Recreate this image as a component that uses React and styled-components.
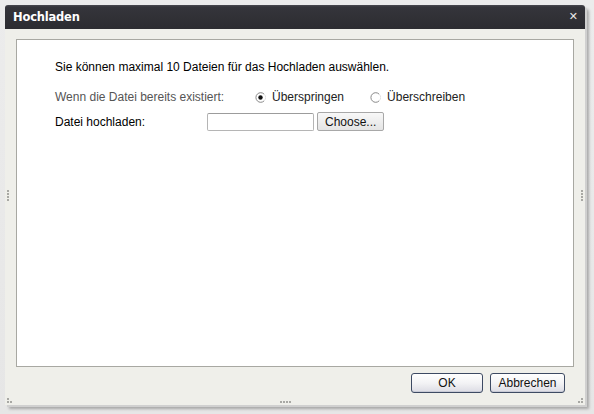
import React from "react";
import styled, { createGlobalStyle } from "styled-components";

const Global = createGlobalStyle`
  html, body { margin: 0; padding: 0; background: #e9e9e9; }
  body { font-family: "Liberation Sans", Arial, sans-serif; }
  #root { width: 594px; height: 414px; overflow: hidden; }
`;

const Page = styled.div`
  width: 594px;
  height: 414px;
  padding: 5px 0 0 5px;
  box-sizing: border-box;
  background: linear-gradient(#ececec, #e6e6e6);
`;

const Window = styled.div`
  position: relative;
  width: 580px;
  height: 400px;
  display: flex;
  flex-direction: column;
  background: #efefea;
  box-shadow: 2px 2px 0 #d0d0d0, 4px 4px 3px rgba(0, 0, 0, 0.28);
  border-radius: 3px 3px 0 0;
`;

const TitleBar = styled.div`
  height: 24px;
  flex: none;
  display: flex;
  align-items: center;
  justify-content: space-between;
  padding: 0 7px 0 8px;
  background: linear-gradient(#4a4a52 0, #35353b 2px, #2c2c31 100%);
  border-radius: 3px 3px 0 0;
  color: #fff;
`;

const Title = styled.span`
  font-family: "DejaVu Sans", Verdana, sans-serif;
  font-weight: bold;
  font-size: 11.5px;
  letter-spacing: -0.2px;
`;

const Close = styled.span`
  font-family: "DejaVu Sans", sans-serif;
  font-size: 11px;
  color: #e8e8e8;
  line-height: 1;
  margin-top: -1px;
`;

const Body = styled.div`
  flex: none;
  display: flex;
  flex-direction: column;
  padding: 10px 11px 0 11px;
`;

const Panel = styled.div`
  height: 328px;
  box-sizing: border-box;
  background: #fff;
  border: 1px solid #a8a8a2;
  padding: 20px 0 0 38px;
  font-size: 12px;
  color: #000;
`;

const Intro = styled.div`
  line-height: 14px;
  margin-bottom: 14px;
`;

const Row = styled.div`
  display: flex;
  align-items: center;
  height: ${(p) => p.$h || 18}px;
  margin-bottom: ${(p) => p.$mb || 0}px;
`;

const Label = styled.span`
  width: ${(p) => p.$w}px;
  flex: none;
  color: ${(p) => p.$color || "#000"};
`;

const RadioOpt = styled.label`
  display: flex;
  align-items: center;
  gap: 6px;
  margin-right: ${(p) => p.$mr || 0}px;
  color: #222;
`;

const Input = styled.div`
  width: 105px;
  height: 16px;
  border: 1px solid #b5b5b5;
  border-top-color: #9c9c9c;
  border-radius: 2px;
  background: #fff;
  margin-right: 3px;
`;

const SmallButton = styled.div`
  height: 17px;
  padding: 0 7px;
  display: flex;
  align-items: center;
  border: 1px solid #a8a8a8;
  border-radius: 2px;
  background: linear-gradient(#f8f8f8, #e4e4e4);
  font-size: 12px;
  color: #111;
`;

const Footer = styled.div`
  flex: 1;
  display: flex;
  justify-content: flex-end;
  align-items: flex-start;
  gap: 7px;
  padding: 6px 20px 0 0;
`;

const Button = styled.div`
  width: ${(p) => p.$w}px;
  height: 18px;
  border: 1px solid #3d4a63;
  border-radius: 3px;
  background: linear-gradient(#ffffff 0%, #f3f3f5 50%, #dcdce4 100%);
  box-shadow: inset 0 -1px 0 #c8cad6;
  display: flex;
  align-items: center;
  justify-content: center;
  font-size: 12px;
  color: #111;
`;

const Grip = styled.div`
  position: absolute;
  display: grid;
  gap: 1px;
  grid-template-columns: repeat(${(p) => p.$cols}, 2px);
  grid-auto-rows: 2px;
  ${(p) => p.$pos}
  & > i { background: #a8a8a4; display: block; }
`;

function Dots({ n }) {
  return Array.from({ length: n }).map((_, i) => <i key={i} />);
}

function Radio({ checked }) {
  return (
    <svg width="11" height="11" viewBox="0 0 11 11">
      <path d="M9.2 2.2 A4.8 4.8 0 1 0 9.2 8.8" fill="none" stroke="#8a8a8a" strokeWidth="1" />
      <path d="M9.2 2.2 A4.8 4.8 0 0 1 9.2 8.8" fill="none" stroke="#e2e2e2" strokeWidth="1" />
      {checked && <circle cx="5.5" cy="5.5" r="2.2" fill="#111" />}
    </svg>
  );
}

export default function App() {
  return (
    <>
      <Global />
      <Page>
        <Window>
          <TitleBar>
            <Title>Hochladen</Title>
            <Close>✕</Close>
          </TitleBar>
          <Body>
            <Panel>
              <Intro>Sie können maximal 10 Dateien für das Hochladen auswählen.</Intro>
              <Row $mb={6}>
                <Label $w={200} $color="#555">Wenn die Datei bereits existiert:</Label>
                <RadioOpt $mr={26}>
                  <Radio checked />
                  Überspringen
                </RadioOpt>
                <RadioOpt>
                  <Radio />
                  Überschreiben
                </RadioOpt>
              </Row>
              <Row $h={19}>
                <Label $w={152}>Datei hochladen:</Label>
                <Input />
                <SmallButton>Choose...</SmallButton>
              </Row>
            </Panel>
          </Body>
          <Footer>
            <Button $w={70}>OK</Button>
            <Button $w={73}>Abbrechen</Button>
          </Footer>
          <Grip $cols={1} $pos="left: 2px; top: 185px;"><Dots n={4} /></Grip>
          <Grip $cols={1} $pos="right: 2px; top: 185px;"><Dots n={4} /></Grip>
          <Grip $cols={4} $pos="left: 275px; bottom: 2px;"><Dots n={4} /></Grip>
          <Grip $cols={2} $pos="right: 2px; bottom: 2px;"><i style={{ visibility: "hidden" }} /><Dots n={3} /></Grip>
          <Grip $cols={2} $pos="left: 2px; bottom: 2px;"><Dots n={1} /><i style={{ visibility: "hidden" }} /><Dots n={2} /></Grip>
        </Window>
      </Page>
    </>
  );
}
